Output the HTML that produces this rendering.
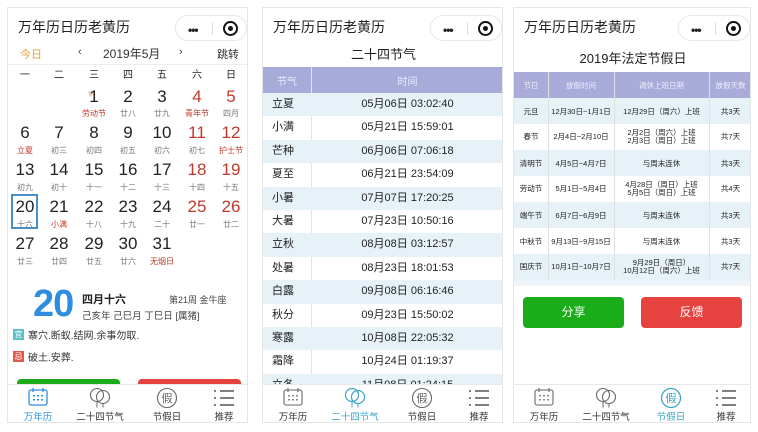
<!DOCTYPE html>
<html><head><meta charset="utf-8">
<style>
*{margin:0;padding:0;box-sizing:border-box}
body{width:758px;height:432px;background:#fff;position:relative;overflow:hidden;font-family:"Liberation Sans","Noto Sans CJK SC",sans-serif;color:#222}
.p{position:absolute;top:7px;height:416px;border:1px solid #e6e6e6;background:#fff;overflow:hidden}
.a{position:absolute;white-space:nowrap}
.c{position:absolute;text-align:center;white-space:nowrap}
.title{font-size:14px;left:10px;top:9px;color:#222}
.cap{position:absolute;top:7px;width:72px;height:26px;border:1px solid #e8e8e8;border-radius:13px;background:#fff}
.cap .d{position:absolute;left:12px;top:7px;font-size:12px;font-weight:bold;letter-spacing:-1px}
.cap .s{position:absolute;left:36px;top:6px;width:1px;height:13px;background:#ddd}
.cap .o{position:absolute;left:47px;top:5px;width:15px;height:15px;border:2px solid #111;border-radius:50%}
.cap .o:after{content:"";position:absolute;left:3px;top:3px;width:5px;height:5px;background:#111;border-radius:50%}
.n{font-size:17px;color:#222;width:34px}
.l{font-size:8px;color:#777;width:34px}
.r{color:#c0392b}
.nav{position:absolute;left:0;right:0;bottom:0;height:38px;border-top:1px solid #e8e8e8;background:#fff}
.nav .t{position:absolute;top:24px;font-size:9.5px;width:60px;text-align:center;color:#333}
.nav svg{position:absolute;top:2px}
.row{position:absolute;left:0;right:0}
</style></head><body>

<!-- LEFT PANEL -->
<div class="p" style="left:7px;width:241px">
 <div class="a title">万年历日历老黄历</div>
 <div class="cap" style="left:167px"><span class="d">•••</span><span class="s"></span><span class="o"></span></div>
 <div class="a" style="left:12px;top:38px;font-size:11px;color:#e6a23c">今日</div>
 <div class="a" style="left:70px;top:38px;font-size:11px;color:#444">‹</div>
 <div class="a" style="left:95px;top:37px;font-size:12px;color:#333">2019年5月</div>
 <div class="a" style="left:171px;top:38px;font-size:11px;color:#444">›</div>
 <div class="a" style="left:209px;top:38px;font-size:11px;color:#333">跳转</div>
 <div class="a" style="left:0;right:0;top:56px;height:1px;background:#eee"></div>
 <div class="c" style="left:0;top:58px;width:34px;font-size:10px">一</div>
 <div class="c" style="left:34px;top:58px;width:34px;font-size:10px">二</div>
 <div class="c" style="left:69px;top:58px;width:34px;font-size:10px">三</div>
 <div class="c" style="left:103px;top:58px;width:34px;font-size:10px">四</div>
 <div class="c" style="left:137px;top:58px;width:34px;font-size:10px">五</div>
 <div class="c" style="left:172px;top:58px;width:34px;font-size:10px">六</div>
 <div class="c" style="left:206px;top:58px;width:34px;font-size:10px">日</div>

 <div class="a" style="left:3px;top:186px;width:27px;height:35px;border:2px solid #4a90c8"></div>

 <div class="a" style="left:80px;top:81px;font-size:6px;color:#e6a23c">休</div>
 <div class="c n" style="left:69px;top:79px">1</div><div class="c l" style="left:69px;top:100px;color:#c0392b">劳动节</div>
 <div class="c n" style="left:103px;top:79px">2</div><div class="c l" style="left:103px;top:100px">廿八</div>
 <div class="c n" style="left:137px;top:79px">3</div><div class="c l" style="left:137px;top:100px">廿九</div>
 <div class="c n r" style="left:172px;top:79px">4</div><div class="c l r" style="left:172px;top:100px">青年节</div>
 <div class="c n r" style="left:206px;top:79px">5</div><div class="c l" style="left:206px;top:100px">四月</div>
 <div class="c n" style="left:0;top:115px">6</div><div class="c l r" style="left:0;top:137px">立夏</div>
 <div class="c n" style="left:34px;top:115px">7</div><div class="c l" style="left:34px;top:137px">初三</div>
 <div class="c n" style="left:69px;top:115px">8</div><div class="c l" style="left:69px;top:137px">初四</div>
 <div class="c n" style="left:103px;top:115px">9</div><div class="c l" style="left:103px;top:137px">初五</div>
 <div class="c n" style="left:137px;top:115px">10</div><div class="c l" style="left:137px;top:137px">初六</div>
 <div class="c n r" style="left:172px;top:115px">11</div><div class="c l" style="left:172px;top:137px">初七</div>
 <div class="c n r" style="left:206px;top:115px">12</div><div class="c l r" style="left:206px;top:137px">护士节</div>
 <div class="c n" style="left:0;top:152px">13</div><div class="c l" style="left:0;top:174px">初九</div>
 <div class="c n" style="left:34px;top:152px">14</div><div class="c l" style="left:34px;top:174px">初十</div>
 <div class="c n" style="left:69px;top:152px">15</div><div class="c l" style="left:69px;top:174px">十一</div>
 <div class="c n" style="left:103px;top:152px">16</div><div class="c l" style="left:103px;top:174px">十二</div>
 <div class="c n" style="left:137px;top:152px">17</div><div class="c l" style="left:137px;top:174px">十三</div>
 <div class="c n r" style="left:172px;top:152px">18</div><div class="c l" style="left:172px;top:174px">十四</div>
 <div class="c n r" style="left:206px;top:152px">19</div><div class="c l" style="left:206px;top:174px">十五</div>
 <div class="c n" style="left:0;top:189px">20</div><div class="c l" style="left:0;top:211px">十六</div>
 <div class="c n" style="left:34px;top:189px">21</div><div class="c l r" style="left:34px;top:211px">小满</div>
 <div class="c n" style="left:69px;top:189px">22</div><div class="c l" style="left:69px;top:211px">十八</div>
 <div class="c n" style="left:103px;top:189px">23</div><div class="c l" style="left:103px;top:211px">十九</div>
 <div class="c n" style="left:137px;top:189px">24</div><div class="c l" style="left:137px;top:211px">二十</div>
 <div class="c n r" style="left:172px;top:189px">25</div><div class="c l" style="left:172px;top:211px">廿一</div>
 <div class="c n r" style="left:206px;top:189px">26</div><div class="c l" style="left:206px;top:211px">廿二</div>
 <div class="c n" style="left:0;top:226px">27</div><div class="c l" style="left:0;top:248px">廿三</div>
 <div class="c n" style="left:34px;top:226px">28</div><div class="c l" style="left:34px;top:248px">廿四</div>
 <div class="c n" style="left:69px;top:226px">29</div><div class="c l" style="left:69px;top:248px">廿五</div>
 <div class="c n" style="left:103px;top:226px">30</div><div class="c l" style="left:103px;top:248px">廿六</div>
 <div class="c n" style="left:137px;top:226px">31</div><div class="c l r" style="left:137px;top:248px">无烟日</div>

 <div class="a" style="left:25px;top:275px;font-size:38px;font-weight:bold;color:#2d8ee0;letter-spacing:-1px">20</div>
 <div class="a" style="left:74px;top:283px;font-size:11px;font-weight:bold;color:#222">四月十六</div>
 <div class="a" style="left:161px;top:285px;font-size:9px;color:#444">第21周 金牛座</div>
 <div class="a" style="left:74px;top:300px;font-size:9.5px;color:#444">己亥年 己巳月 丁巳日 [属猪]</div>
 <div class="a" style="left:5px;top:321px;width:11px;height:11px;background:#5bc0c8;color:#fff;font-size:8px;text-align:center;line-height:11px;overflow:hidden">宜</div>
 <div class="a" style="left:20px;top:319px;font-size:10px;color:#333">寨穴.断蚁.结网.余事勿取.</div>
 <div class="a" style="left:5px;top:343px;width:11px;height:11px;background:#e05a4a;color:#fff;font-size:8px;text-align:center;line-height:11px;overflow:hidden">忌</div>
 <div class="a" style="left:20px;top:341px;font-size:10px;color:#333">破土.安葬.</div>
 <div class="a" style="left:9px;top:371px;width:103px;height:20px;background:#1aad19;border-radius:4px"></div>
 <div class="a" style="left:130px;top:371px;width:103px;height:20px;background:#e64340;border-radius:4px"></div>

 <div class="nav">
  <svg style="left:19px" width="22" height="20" viewBox="0 0 22 20"><rect x="2" y="3" width="18" height="15" rx="2" fill="none" stroke="#2d8ee0" stroke-width="1.3"/><path d="M6 1v4M16 1v4" stroke="#2d8ee0" stroke-width="1.3"/><g fill="#2d8ee0"><rect x="6" y="8" width="2" height="1.5"/><rect x="10" y="8" width="2" height="1.5"/><rect x="14" y="8" width="2" height="1.5"/><rect x="6" y="12" width="2" height="1.5"/><rect x="10" y="12" width="2" height="1.5"/><rect x="14" y="12" width="2" height="1.5"/></g></svg>
  <div class="t" style="left:0;color:#2d8ee0">万年历</div>
  <svg style="left:80px" width="24" height="22" viewBox="0 0 24 22"><circle cx="9" cy="8" r="6.5" fill="none" stroke="#666" stroke-width="1.1"/><circle cx="15" cy="10" r="6.5" fill="none" stroke="#666" stroke-width="1.1"/><path d="M9 14.5v6M15 16.5v4" stroke="#666"/></svg>
  <div class="t" style="left:62px">二十四节气</div>
  <svg style="left:147px" width="24" height="22" viewBox="0 0 24 22"><circle cx="12" cy="11" r="9.5" fill="none" stroke="#666" stroke-width="1.1"/><text x="12" y="15" text-anchor="middle" font-size="11" fill="#666" font-family="Noto Sans CJK SC">假</text></svg>
  <div class="t" style="left:129px">节假日</div>
  <svg style="left:204px" width="24" height="22" viewBox="0 0 24 22"><path d="M2 4h2M8 4h14M2 11h2M8 11h14M2 18h2M8 18h14" stroke="#555" stroke-width="1.6"/></svg>
  <div class="t" style="left:186px">推荐</div>
 </div>
</div>

<!-- MIDDLE PANEL -->
<div class="p" style="left:262px;width:241px">
 <div class="a title">万年历日历老黄历</div>
 <div class="cap" style="left:167px"><span class="d">•••</span><span class="s"></span><span class="o"></span></div>
 <div class="c" style="left:0;width:241px;top:36px;font-size:13px;color:#222">二十四节气</div>
 <div class="row" style="top:59px;height:26px;background:#a7abd9"></div>
 <div class="a" style="left:48px;top:59px;width:1px;height:324px;background:#e3e3e3"></div>
 <div class="c" style="left:0;width:48px;top:65px;font-size:10px;color:#eef">节气</div>
 <div class="c" style="left:48px;width:193px;top:65px;font-size:10px;color:#eef">时间</div>
 <div class="row" style="top:85px;height:23.4px;background:#e6f1f8"></div>
 <div class="row" style="top:131.8px;height:23.4px;background:#e6f1f8"></div>
 <div class="row" style="top:178.6px;height:23.4px;background:#e6f1f8"></div>
 <div class="row" style="top:225.4px;height:23.4px;background:#e6f1f8"></div>
 <div class="row" style="top:272.2px;height:23.4px;background:#e6f1f8"></div>
 <div class="row" style="top:319px;height:23.4px;background:#e6f1f8"></div>
 <div class="row" style="top:365.8px;height:23.4px;background:#e6f1f8"></div>
 <div style="position:absolute;left:0;top:85px;width:241px;font-size:11px;color:#222;line-height:23.4px">
  <div style="display:flex"><span style="width:48px;padding-left:9px">立夏</span><span style="flex:1;text-align:center">05月06日 03:02:40</span></div>
  <div style="display:flex"><span style="width:48px;padding-left:9px">小满</span><span style="flex:1;text-align:center">05月21日 15:59:01</span></div>
  <div style="display:flex"><span style="width:48px;padding-left:9px">芒种</span><span style="flex:1;text-align:center">06月06日 07:06:18</span></div>
  <div style="display:flex"><span style="width:48px;padding-left:9px">夏至</span><span style="flex:1;text-align:center">06月21日 23:54:09</span></div>
  <div style="display:flex"><span style="width:48px;padding-left:9px">小暑</span><span style="flex:1;text-align:center">07月07日 17:20:25</span></div>
  <div style="display:flex"><span style="width:48px;padding-left:9px">大暑</span><span style="flex:1;text-align:center">07月23日 10:50:16</span></div>
  <div style="display:flex"><span style="width:48px;padding-left:9px">立秋</span><span style="flex:1;text-align:center">08月08日 03:12:57</span></div>
  <div style="display:flex"><span style="width:48px;padding-left:9px">处暑</span><span style="flex:1;text-align:center">08月23日 18:01:53</span></div>
  <div style="display:flex"><span style="width:48px;padding-left:9px">白露</span><span style="flex:1;text-align:center">09月08日 06:16:46</span></div>
  <div style="display:flex"><span style="width:48px;padding-left:9px">秋分</span><span style="flex:1;text-align:center">09月23日 15:50:02</span></div>
  <div style="display:flex"><span style="width:48px;padding-left:9px">寒露</span><span style="flex:1;text-align:center">10月08日 22:05:32</span></div>
  <div style="display:flex"><span style="width:48px;padding-left:9px">霜降</span><span style="flex:1;text-align:center">10月24日 01:19:37</span></div>
  <div style="display:flex"><span style="width:48px;padding-left:9px">立冬</span><span style="flex:1;text-align:center">11月08日 01:24:15</span></div>
 </div>
 <div class="nav">
  <svg style="left:19px" width="22" height="20" viewBox="0 0 22 20"><rect x="2" y="3" width="18" height="15" rx="2" fill="none" stroke="#666" stroke-width="1.1"/><path d="M6 1v4M16 1v4" stroke="#666" stroke-width="1.1"/><g fill="#888"><rect x="6" y="8" width="2" height="1.5"/><rect x="10" y="8" width="2" height="1.5"/><rect x="14" y="8" width="2" height="1.5"/><rect x="6" y="12" width="2" height="1.5"/><rect x="10" y="12" width="2" height="1.5"/><rect x="14" y="12" width="2" height="1.5"/></g></svg>
  <div class="t" style="left:0">万年历</div>
  <svg style="left:80px" width="24" height="22" viewBox="0 0 24 22"><circle cx="9" cy="8" r="6.5" fill="none" stroke="#3aa6c8" stroke-width="1.2"/><circle cx="15" cy="10" r="6.5" fill="none" stroke="#3aa6c8" stroke-width="1.2"/><path d="M9 14.5v6M15 16.5v4" stroke="#3aa6c8"/></svg>
  <div class="t" style="left:62px;color:#3aa6c8">二十四节气</div>
  <svg style="left:147px" width="24" height="22" viewBox="0 0 24 22"><circle cx="12" cy="11" r="9.5" fill="none" stroke="#666" stroke-width="1.1"/><text x="12" y="15" text-anchor="middle" font-size="11" fill="#666" font-family="Noto Sans CJK SC">假</text></svg>
  <div class="t" style="left:129px">节假日</div>
  <svg style="left:204px" width="24" height="22" viewBox="0 0 24 22"><path d="M2 4h2M8 4h14M2 11h2M8 11h14M2 18h2M8 18h14" stroke="#555" stroke-width="1.6"/></svg>
  <div class="t" style="left:186px">推荐</div>
 </div>
</div>

<!-- RIGHT PANEL -->
<div class="p" style="left:513px;width:238px">
 <div class="a title">万年历日历老黄历</div>
 <div class="cap" style="left:164px"><span class="d">•••</span><span class="s"></span><span class="o"></span></div>
 <div class="c" style="left:0;width:238px;top:40px;font-size:13px;color:#222">2019年法定节假日</div>
 <div class="row" style="top:64px;height:26px;background:#a9abd8"></div>
 <div class="row" style="top:90px;height:26px;background:#e6f1f8"></div>
 <div class="row" style="top:142px;height:26px;background:#e6f1f8"></div>
 <div class="row" style="top:194px;height:26px;background:#e6f1f8"></div>
 <div class="row" style="top:246px;height:26px;background:#e6f1f8"></div>
 <div class="row" style="top:272px;height:6px;background:#eef5fa"></div>
 <div class="a" style="left:34px;top:64px;width:1px;height:208px;background:#e0e0e0"></div>
 <div class="a" style="left:100px;top:64px;width:1px;height:208px;background:#e0e0e0"></div>
 <div class="a" style="left:195px;top:64px;width:1px;height:208px;background:#e0e0e0"></div>
 <div style="position:absolute;left:0;top:64px;width:238px;font-size:7.5px;color:#222">
  <div style="display:flex;height:26px;align-items:center;color:#eef"><span style="width:34px;text-align:center">节日</span><span style="width:66px;text-align:center">放假时间</span><span style="width:95px;text-align:center">调休上班日期</span><span style="flex:1;text-align:center">放假天数</span></div>
  <div style="display:flex;height:26px;align-items:center"><span style="width:34px;text-align:center">元旦</span><span style="width:66px;text-align:center">12月30日~1月1日</span><span style="width:95px;text-align:center">12月29日（周六）上班</span><span style="flex:1;text-align:center">共3天</span></div>
  <div style="display:flex;height:26px;align-items:center;line-height:8px"><span style="width:34px;text-align:center">春节</span><span style="width:66px;text-align:center">2月4日~2月10日</span><span style="width:95px;text-align:center">2月2日（周六）上班<br>2月3日（周日）上班</span><span style="flex:1;text-align:center">共7天</span></div>
  <div style="display:flex;height:26px;align-items:center"><span style="width:34px;text-align:center">清明节</span><span style="width:66px;text-align:center">4月5日~4月7日</span><span style="width:95px;text-align:center">与周末连休</span><span style="flex:1;text-align:center">共3天</span></div>
  <div style="display:flex;height:26px;align-items:center;line-height:8px"><span style="width:34px;text-align:center">劳动节</span><span style="width:66px;text-align:center">5月1日~5月4日</span><span style="width:95px;text-align:center">4月28日（周日）上班<br>5月5日（周日）上班</span><span style="flex:1;text-align:center">共4天</span></div>
  <div style="display:flex;height:26px;align-items:center"><span style="width:34px;text-align:center">端午节</span><span style="width:66px;text-align:center">6月7日~6月9日</span><span style="width:95px;text-align:center">与周末连休</span><span style="flex:1;text-align:center">共3天</span></div>
  <div style="display:flex;height:26px;align-items:center"><span style="width:34px;text-align:center">中秋节</span><span style="width:66px;text-align:center">9月13日~9月15日</span><span style="width:95px;text-align:center">与周末连休</span><span style="flex:1;text-align:center">共3天</span></div>
  <div style="display:flex;height:26px;align-items:center;line-height:8px"><span style="width:34px;text-align:center">国庆节</span><span style="width:66px;text-align:center">10月1日~10月7日</span><span style="width:95px;text-align:center">9月29日（周日）<br>10月12日（周六）上班</span><span style="flex:1;text-align:center">共7天</span></div>
 </div>
 <div class="c" style="left:9px;top:289px;width:101px;height:31px;background:#1aad19;border-radius:4px;color:#fff;font-size:12px;line-height:31px">分享</div>
 <div class="c" style="left:127px;top:289px;width:101px;height:31px;background:#e64340;border-radius:4px;color:#fff;font-size:12px;line-height:31px">反馈</div>
 <div class="nav">
  <svg style="left:19px" width="22" height="20" viewBox="0 0 22 20"><rect x="2" y="3" width="18" height="15" rx="2" fill="none" stroke="#666" stroke-width="1.1"/><path d="M6 1v4M16 1v4" stroke="#666" stroke-width="1.1"/><g fill="#888"><rect x="6" y="8" width="2" height="1.5"/><rect x="10" y="8" width="2" height="1.5"/><rect x="14" y="8" width="2" height="1.5"/><rect x="6" y="12" width="2" height="1.5"/><rect x="10" y="12" width="2" height="1.5"/><rect x="14" y="12" width="2" height="1.5"/></g></svg>
  <div class="t" style="left:0">万年历</div>
  <svg style="left:80px" width="24" height="22" viewBox="0 0 24 22"><circle cx="9" cy="8" r="6.5" fill="none" stroke="#666" stroke-width="1.1"/><circle cx="15" cy="10" r="6.5" fill="none" stroke="#666" stroke-width="1.1"/><path d="M9 14.5v6M15 16.5v4" stroke="#666"/></svg>
  <div class="t" style="left:62px">二十四节气</div>
  <svg style="left:145px" width="24" height="22" viewBox="0 0 24 22"><circle cx="12" cy="11" r="9.5" fill="none" stroke="#3aa6c8" stroke-width="1.3"/><text x="12" y="15" text-anchor="middle" font-size="11" fill="#3aa6c8" font-family="Noto Sans CJK SC">假</text></svg>
  <div class="t" style="left:127px;color:#3aa6c8">节假日</div>
  <svg style="left:200px" width="24" height="22" viewBox="0 0 24 22"><path d="M2 4h2M8 4h14M2 11h2M8 11h14M2 18h2M8 18h14" stroke="#555" stroke-width="1.6"/></svg>
  <div class="t" style="left:182px">推荐</div>
 </div>
</div>
</body></html>
